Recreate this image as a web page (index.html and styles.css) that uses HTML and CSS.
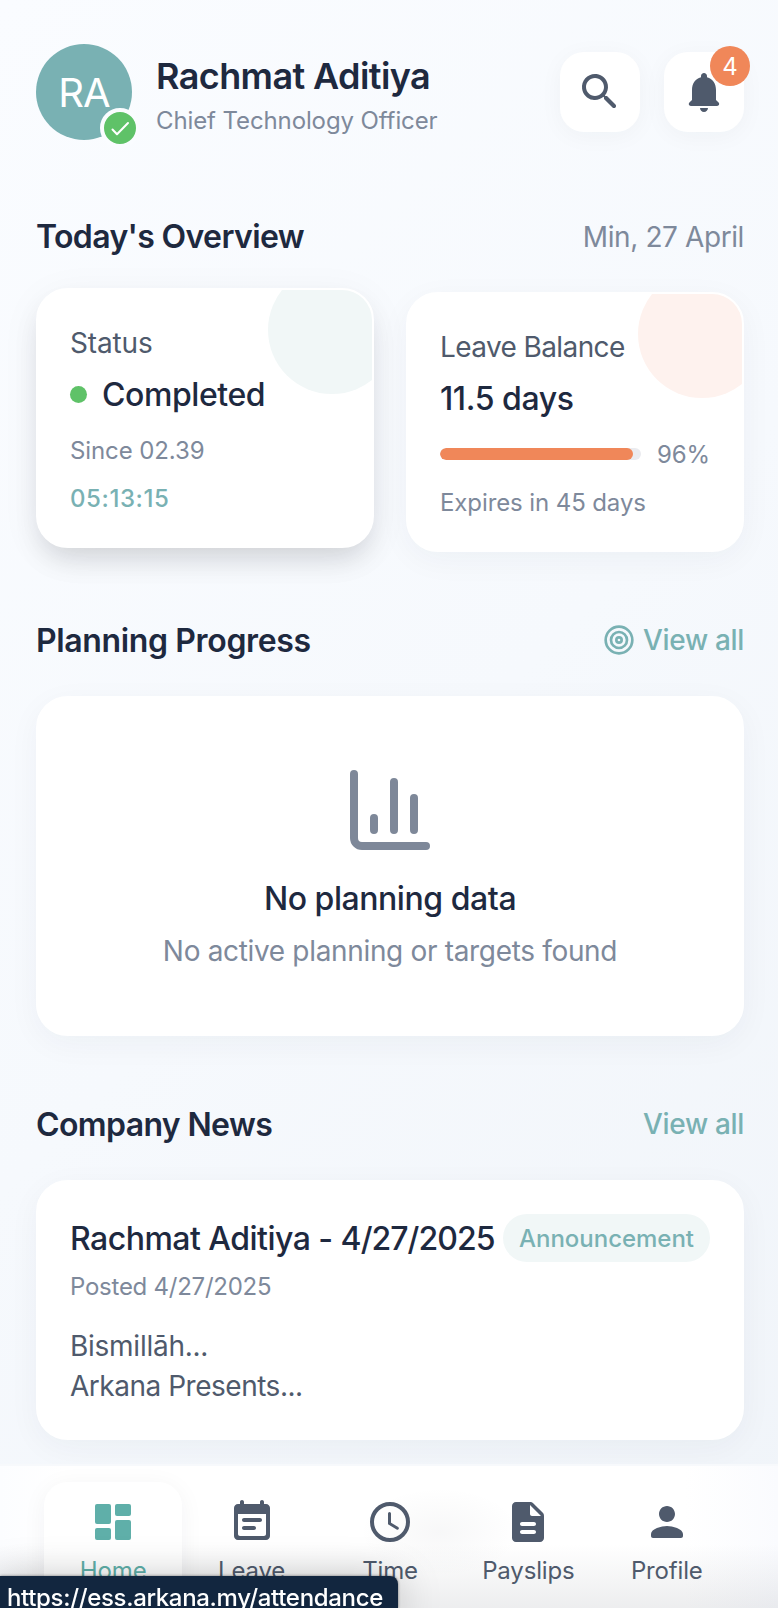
FILE: index.html
```html
<!DOCTYPE html>
<html lang="en">
<head>
<meta charset="utf-8">
<title>Employee Self Service</title>
<link rel="stylesheet" href="styles.css">
</head>
<body>
<div class="app">
  <header class="header">
    <div class="avatar">
      <span class="initials">RA</span>
      <span class="verified"><svg viewBox="0 0 32 32"><path d="M8.5 17.5l4.5 4.7L24 11" fill="none" stroke="#fff" stroke-width="2" stroke-linecap="round" stroke-linejoin="round"/></svg></span>
    </div>
    <div class="person">
      <h1 class="name">Rachmat Aditiya</h1>
      <p class="role">Chief Technology Officer</p>
    </div>
    <div class="actions">
      <button class="icon-btn" aria-label="Search"><svg class="icon" viewBox="0 0 24 24"><path d="M15.5 14h-.79l-.28-.27c1.2-1.4 1.82-3.31 1.48-5.34-.47-2.78-2.79-5-5.59-5.34-4.23-.52-7.79 3.04-7.27 7.27.34 2.8 2.56 5.12 5.34 5.59 2.03.34 3.94-.28 5.34-1.48l.27.28v.79l4.25 4.25c.41.41 1.08.41 1.49 0 .41-.41.41-1.08 0-1.49L15.5 14zm-6 0C7.01 14 5 11.99 5 9.5S7.01 5 9.5 5 14 7.01 14 9.5 11.99 14 9.5 14z"/></svg></button>
      <button class="icon-btn" aria-label="Notifications"><svg class="icon" viewBox="0 0 24 24"><path d="M12 22c1.1 0 2-.9 2-2h-4c0 1.1.89 2 2 2zm6-6v-5c0-3.07-1.64-5.64-4.5-6.32V4c0-.83-.67-1.5-1.5-1.5s-1.5.67-1.5 1.5v.68C7.63 5.36 6 7.92 6 11v5l-1.29 1.29c-.63.63-.19 1.71.7 1.71h13.17c.89 0 1.34-1.08.71-1.71L18 16z"/></svg><span class="count">4</span></button>
    </div>
  </header>

  <section class="section">
    <div class="section-head">
      <h2 class="section-title">Today's Overview</h2>
      <span class="date">Min, 27 April</span>
    </div>
    <div class="cards">
      <article class="card stat stat-status">
        <p class="label label-status">Status</p>
        <p class="value"><span class="dot"></span>Completed</p>
        <p class="meta">Since 02.39</p>
        <p class="meta timer">05:13:15</p>
      </article>
      <article class="card stat stat-leave">
        <p class="label">Leave Balance</p>
        <p class="value">11.5 days</p>
        <div class="meta progress"><span class="track"><span class="fill" style="width:96%"></span></span><span class="percent">96%</span></div>
        <p class="meta">Expires in 45 days</p>
      </article>
    </div>
  </section>

  <section class="section">
    <div class="section-head">
      <h2 class="section-title title-planning">Planning Progress</h2>
      <a class="link"><svg class="target" viewBox="0 0 24 24" fill="none" stroke="currentColor" stroke-width="2"><circle cx="12" cy="12" r="10"/><circle cx="12" cy="12" r="6"/><circle cx="12" cy="12" r="2"/></svg>View all</a>
    </div>
    <div class="card empty">
      <svg class="chart" viewBox="0 0 24 24" fill="none" stroke="currentColor" stroke-width="2" stroke-linecap="round" stroke-linejoin="round"><path d="M3 3v16a2 2 0 0 0 2 2h16M18 17V9M13 17V5M8 17v-3"/></svg>
      <p class="empty-title">No planning data</p>
      <p class="empty-text">No active planning or targets found</p>
    </div>
  </section>

  <section class="section">
    <div class="section-head">
      <h2 class="section-title">Company News</h2>
      <a class="link">View all</a>
    </div>
    <article class="card news">
      <div class="news-head">
        <h3 class="news-title">Rachmat Aditiya - <span class="news-date">4/27/2025</span></h3>
        <span class="tag">Announcement</span>
      </div>
      <p class="posted">Posted 4/27/2025</p>
      <p class="news-body"><span class="greeting">Bismillāh...</span><br>Arkana Presents...</p>
    </article>
  </section>
</div>

<nav class="nav">
  <a class="nav-item active"><svg class="icon" viewBox="0 0 24 24"><rect x="3" y="3" width="8" height="10" rx="1"/><rect x="3" y="15" width="8" height="6" rx="1"/><rect x="13" y="3" width="8" height="6" rx="1"/><rect x="13" y="11" width="8" height="10" rx="1"/></svg><span>Home</span></a>
  <a class="nav-item"><svg class="icon" viewBox="0 0 24 24"><path d="M16 10H8c-.55 0-1 .45-1 1s.45 1 1 1h8c.55 0 1-.45 1-1s-.45-1-1-1zm3-7h-1V2c0-.55-.45-1-1-1s-1 .45-1 1v1H8V2c0-.55-.45-1-1-1s-1 .45-1 1v1H5c-1.11 0-2 .9-2 2v14c0 1.1.89 2 2 2h14c1.1 0 2-.9 2-2V5c0-1.1-.9-2-2-2zm-1 16H6c-.55 0-1-.45-1-1V8h14v10c0 .55-.45 1-1 1zm-5-5H8c-.55 0-1 .45-1 1s.45 1 1 1h5c.55 0 1-.45 1-1s-.45-1-1-1z"/></svg><span>Leave</span></a>
  <a class="nav-item"><svg class="icon" viewBox="0 0 24 24" ><g fill="none" stroke="currentColor" stroke-linecap="round"><circle cx="12" cy="12" r="9" stroke-width="2"/><path d="M11.75 7.75v5l3.95 2.35" stroke-width="1.5"/></g></svg><span>Time</span></a>
  <a class="nav-item"><svg class="icon" viewBox="0 0 24 24"><path d="M14.59 2.59c-.38-.38-.89-.59-1.42-.59H6c-1.1 0-2 .9-2 2v16c0 1.1.89 2 1.99 2H18c1.1 0 2-.9 2-2V8.83c0-.53-.21-1.04-.59-1.41l-4.82-4.83zM15 18H9c-.55 0-1-.45-1-1s.45-1 1-1h6c.55 0 1 .45 1 1s-.45 1-1 1zm0-4H9c-.55 0-1-.45-1-1s.45-1 1-1h6c.55 0 1 .45 1 1s-.45 1-1 1zm-2-6V3.5L18.5 9H14c-.55 0-1-.45-1-1z"/></svg><span>Payslips</span></a>
  <a class="nav-item"><svg class="icon" viewBox="0 0 24 24"><path d="M12 12c2.21 0 4-1.79 4-4s-1.79-4-4-4-4 1.79-4 4 1.79 4 4 4zm0 2c-2.67 0-8 1.34-8 4v1c0 .55.45 1 1 1h14c.55 0 1-.45 1-1v-1c0-2.66-5.33-4-8-4z"/></svg><span>Profile</span></a>
</nav>
<div class="status-url">https://ess.arkana.my/attendance</div>
</body>
</html>
```

FILE: styles.css
```css
* { box-sizing: border-box; margin: 0; padding: 0; }

html, body { height: 100%; overflow: hidden; }

body {
  font-family: Inter, "Liberation Sans", sans-serif;
  color: #1e293f;
  background: linear-gradient(135deg, #fafcff 0%, #f6f9fd 50%, #f0f4f9 100%);
}

.app { padding: 44px 34px 0 36px; }

.icon { width: 48px; height: 48px; fill: currentColor; display: block; }

/* Header */
.header { display: flex; align-items: flex-start; height: 96px; }

.avatar {
  position: relative;
  width: 96px;
  height: 96px;
  border-radius: 50%;
  background: #79b1b3;
  color: #fff;
  display: flex;
  align-items: center;
  justify-content: center;
}

.initials { padding-top: 2px; font-size: 40px; line-height: 48px; letter-spacing: -0.8px; }

.verified {
  position: absolute;
  right: -8px;
  bottom: -8px;
  width: 40px;
  height: 40px;
  border: 4px solid #fafcff;
  border-radius: 50%;
  background: #5fc268;
}

.verified svg { display: block; width: 32px; height: 32px; }

.person { margin: 7px 0 0 20px; padding-left: 4px; flex: 1; }
.name { font-size: 36px; line-height: 50px; font-weight: 600; letter-spacing: -0.6px; white-space: nowrap; }
.role { margin-top: 1px; font-size: 24px; line-height: 38px; color: #7e899b; letter-spacing: -0.11px; white-space: nowrap; }

.actions { display: flex; gap: 24px; padding-top: 8px; }

.icon-btn {
  position: relative;
  width: 80px;
  height: 80px;
  border: 0;
  border-radius: 24px;
  background: #fff;
  color: #4f5a6c;
  padding: 16px;
  font-family: inherit;
  box-shadow: 0 4px 24px rgba(30, 41, 63, 0.04);
}

.count {
  position: absolute;
  top: -6px;
  right: -6px;
  width: 40px;
  height: 40px;
  border-radius: 50%;
  background: #f08759;
  color: #fff;
  font-size: 24px;
  line-height: 42px;
  text-align: center;
}

/* Sections */
.section { margin-top: 64px; }
.header + .section { margin-top: 72px; }

.section-head { display: flex; justify-content: space-between; align-items: center; height: 48px; margin-bottom: 32px; }
.section-title { padding-top: 2px; font-size: 32px; line-height: 48px; font-weight: 600; white-space: nowrap; letter-spacing: -0.63px; }
.title-planning { letter-spacing: -0.36px; }
.date { padding-top: 1px; font-size: 28px; line-height: 40px; color: #7e899b; letter-spacing: -0.4px; }
.link { display: flex; align-items: center; gap: 8px; font-size: 28px; line-height: 40px; font-weight: 500; color: #79b1b3; letter-spacing: -0.33px; }
.target { width: 32px; height: 32px; }

.card {
  background: #fff;
  border: 2px solid #fff;
  border-radius: 32px;
  padding: 32px;
  box-shadow: 0 8px 32px rgba(30, 41, 63, 0.045);
}

.cards { display: grid; grid-template-columns: 1fr 1fr; gap: 32px; }

.stat { position: relative; overflow: hidden; height: 260px; padding-top: 33px; }

.stat::before {
  content: "";
  position: absolute;
  top: -24px;
  right: -24px;
  width: 128px;
  height: 128px;
  border-radius: 50%;
  background: #fef2ee;
}

.stat-status::before { background: #f1f7f7; }
.stat-status { transform: translateY(-4px); box-shadow: 0 8px 40px rgba(30, 41, 63, 0.05), 0 16px 28px -6px rgba(0, 0, 0, 0.13); }

.label { position: relative; font-size: 28px; line-height: 40px; color: #4f5a6c; letter-spacing: -0.6px; }
.label-status { letter-spacing: -0.15px; }
.value { display: flex; align-items: center; margin-top: 8px; font-size: 32px; line-height: 48px; font-weight: 500; white-space: nowrap; letter-spacing: -0.42px; }
.dot { width: 17px; height: 17px; border-radius: 50%; background: #5fc268; margin: 0 15px 2px 0; }
.meta { margin-top: 16px; font-size: 24px; line-height: 32px; color: #7e899b; letter-spacing: -0.1px; white-space: nowrap; }
.timer { color: #79b1b3; font-weight: 500; letter-spacing: 0.6px; }

.progress { display: flex; align-items: center; gap: 16px; }
.track { flex: 1; height: 12px; margin-bottom: 2px; border-radius: 6px; background: #eaebef; overflow: hidden; }
.fill { display: block; height: 12px; border-radius: 6px; background: #f08759; }

/* Empty state */
.empty { padding: 64px 32px 60px; height: 340px; display: flex; flex-direction: column; align-items: center; }
.chart { flex-shrink: 0; width: 96px; height: 96px; color: #7e8899; }
.empty-title { margin-top: 17px; font-size: 32px; line-height: 48px; font-weight: 500; letter-spacing: -0.45px; }
.empty-text { margin-top: 8px; font-size: 28px; line-height: 40px; color: #7e899b; letter-spacing: -0.33px; }

/* News */
.news { height: 260px; }
.news-head { display: flex; justify-content: space-between; align-items: flex-start; height: 48px; }
.news-title { padding-top: 1px; font-size: 32px; line-height: 48px; font-weight: 500; white-space: nowrap; letter-spacing: -0.52px; }
.news-date { letter-spacing: -0.96px; }
.tag { padding: 1px 16px 0; height: 48px; border-radius: 24px; background: #f1f7f7; color: #79b1b3; font-size: 24px; line-height: 48px; font-weight: 500; letter-spacing: -0.02px; }
.posted { margin-top: 9px; font-size: 24px; line-height: 32px; color: #7e899b; letter-spacing: -0.25px; }
.news-body { margin-top: 23px; font-size: 28px; line-height: 40px; color: #4f5a6c; letter-spacing: -0.48px; }
.greeting { letter-spacing: -0.26px; }

/* Bottom navigation */
.nav {
  position: fixed;
  left: 0;
  right: 0;
  bottom: 0;
  height: 144px;
  padding: 16px 42px 0 44px;
  border-top: 2px solid #f7f9fc;
  display: grid;
  grid-template-columns: repeat(5, 1fr);
  background:
    linear-gradient(180deg, rgba(90, 95, 105, 0) 55%, rgba(90, 95, 105, 0.11) 100%),
    radial-gradient(ellipse 80px 44px at 440px 66px, rgba(60, 65, 80, 0.04), transparent),
    linear-gradient(90deg, #fcfdff, #fff 8%, #fff 88%, #fafbfe);
  overflow: hidden;
}

.nav-item {
  display: flex;
  flex-direction: column;
  align-items: center;
  padding-top: 16px;
  height: 136px;
  border-radius: 24px;
  color: #4f5a6c;
  font-size: 24px;
  line-height: 32px;
  letter-spacing: -0.15px;
}

.nav-item span { margin-top: 9px; }
.active { color: #5fafa9; background: rgba(255, 255, 255, 0.75); box-shadow: 0 4px 24px rgba(30, 41, 63, 0.05); }

.status-url {
  position: fixed;
  left: 0;
  bottom: 0;
  width: 398px;
  height: 32px;
  padding: 5px 0 0 7px;
  border-top-right-radius: 8px;
  background: #12263f;
  color: #fff;
  font-size: 24px;
  line-height: 34px;
  font-weight: 500;
  letter-spacing: -0.33px;
  white-space: nowrap;
  box-shadow: 0 0 3px rgba(0, 0, 0, 0.5), 0 6px 44px rgba(0, 0, 0, 0.28);
}
```
